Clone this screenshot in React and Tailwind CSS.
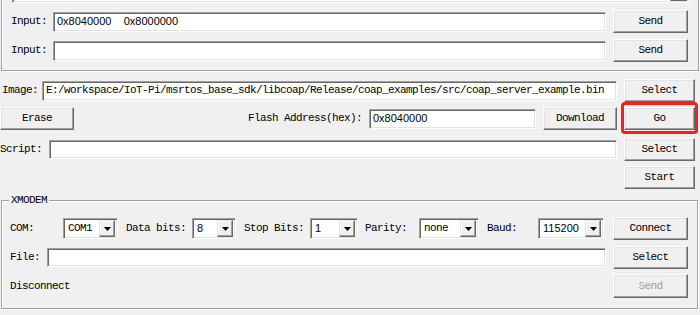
import React from "react";

const mono = "font-['Liberation_Mono',monospace] text-[11px] tracking-[-0.6px] leading-none";
const sans = "font-['Liberation_Sans',Arial,sans-serif] text-[11px] leading-none text-black";

function Btn({ w, h = 23, children, disabled, className = "" }) {
  return (
    <div
      className={`shrink-0 flex items-center justify-center bg-[#f0f0f0] border border-t-white border-l-white border-r-[#696969] border-b-[#696969] shadow-[inset_-1px_-1px_0_#a0a0a0,inset_1px_1px_0_#e3e3e3] ${mono} ${
        disabled ? "text-[#a0a0a0]" : "text-black"
      } ${className}`}
      style={{ width: w, height: h }}
    >
      {children}
    </div>
  );
}

function TextBox({ w, h = 20, children, className = "" }) {
  return (
    <div
      className={`shrink-0 flex items-center overflow-hidden whitespace-pre bg-white border border-t-[#a0a0a0] border-l-[#a0a0a0] border-b-white border-r-white shadow-[inset_1px_1px_0_#696969,inset_-1px_-1px_0_#e3e3e3] ${className}`}
      style={{ width: w, height: h }}
    >
      {children}
    </div>
  );
}

function Combo({ w, value, font }) {
  return (
    <TextBox w={w} h={21} className="justify-between pl-[4px] pr-[2px]">
      <span className={font}>{value}</span>
      <div className="w-[16px] h-[17px] flex items-center justify-center bg-[#f0f0f0] border border-t-[#e3e3e3] border-l-[#e3e3e3] border-r-[#696969] border-b-[#696969] shadow-[inset_-1px_-1px_0_#a0a0a0,inset_1px_1px_0_#fff]">
        <svg width="7" height="4" viewBox="0 0 7 4">
          <path d="M0 0h7L3.5 4z" fill="#000" />
        </svg>
      </div>
    </TextBox>
  );
}

function Label({ w, children, className = "" }) {
  return (
    <div className={`shrink-0 whitespace-pre text-black ${mono} ${className}`} style={{ width: w }}>
      {children}
    </div>
  );
}

export default function App() {
  return (
    <div className="w-[700px] h-[315px] overflow-hidden bg-[#f0f0f0] relative">
      {/* serial send group, top cut off */}
      <div className="ml-[1px] w-[698px] h-[101px] -mt-[30px] border border-[#a0a0a0] shadow-[inset_1px_1px_0_#fff,1px_1px_0_#fff] pl-[9px] pt-[10px]">
        <TextBox w={677} h={22} className="ml-[1px] justify-end pr-[1px]">
          <div className="w-[17px] h-[18px] bg-[#f0f0f0] border border-t-[#e3e3e3] border-l-[#e3e3e3] border-r-[#696969] border-b-[#696969]" />
        </TextBox>
        <div className="flex items-center h-[23px] mt-[7px]">
          <Label w={42}>Input:</Label>
          <TextBox w={553} className="pl-[3px]">
            <span className={sans}>{"0x8040000    0x8000000"}</span>
          </TextBox>
          <Btn w={75} className="ml-[7px]">Send</Btn>
        </div>
        <div className="flex items-center h-[23px] mt-[6px]">
          <Label w={42}>Input:</Label>
          <TextBox w={553} />
          <Btn w={75} className="ml-[7px]">Send</Btn>
        </div>
      </div>

      {/* image */}
      <div className="flex items-center h-[23px] mt-[8px]">
        <Label w={42} className="pl-[2px]">Image:</Label>
        <TextBox w={575} className="pl-[3px]">
          <span className={`text-black ${mono}`}>
            E:/workspace/IoT-Pi/msrtos_base_sdk/libcoap/Release/coap_examples/src/coap_server_example.bin
          </span>
        </TextBox>
        <Btn w={71} className="ml-[7px]">Select</Btn>
      </div>

      <div className="flex items-center h-[23px] mt-[5px]">
        <Btn w={74}>Erase</Btn>
        <Label w={121} className="ml-[174px]">Flash Address(hex):</Label>
        <TextBox w={167} h={20} className="pl-[3px]">
          <span className={sans}>0x8040000</span>
        </TextBox>
        <Btn w={74} className="ml-[7px]">Download</Btn>
        <Btn w={71} className="ml-[7px]">Go</Btn>
      </div>

      <div className="flex items-center h-[23px] mt-[8px]">
        <Label w={49}>Script:</Label>
        <TextBox w={568} h={19} />
        <Btn w={71} className="ml-[7px]">Select</Btn>
      </div>

      <div className="flex items-center h-[23px] mt-[5px]">
        <Btn w={71} className="ml-[624px]">Start</Btn>
      </div>

      {/* XMODEM group */}
      <div className="relative ml-[1px] mt-[11px] w-[697px] h-[109px] border border-[#a0a0a0] shadow-[inset_1px_1px_0_#fff,1px_1px_0_#fff] pl-[8px] pt-[16px]">
        <span className={`absolute -top-[6px] left-[7px] px-[2px] bg-[#f0f0f0] text-black ${mono}`}>XMODEM</span>
        <div className="flex items-center h-[23px]">
          <Label w={53}>COM:</Label>
          <Combo w={55} value="COM1" font={`text-black ${mono}`} />
          <Label w={66} className="ml-[8px]">Data bits:</Label>
          <Combo w={44} value="8" font={sans} />
          <Label w={66} className="ml-[8px]">Stop Bits:</Label>
          <Combo w={48} value="1" font={sans} />
          <Label w={54} className="ml-[7px]">Parity:</Label>
          <Combo w={60} value="none" font={`text-black ${mono}`} />
          <Label w={51} className="ml-[8px]">Baud:</Label>
          <Combo w={66} value="115200" font={sans} />
          <Btn w={75} className="ml-[9px]">Connect</Btn>
        </div>
        <div className="flex items-center h-[23px] mt-[6px]">
          <Label w={37}>File:</Label>
          <TextBox w={559} h={19} />
          <Btn w={75} className="ml-[7px]">Select</Btn>
        </div>
        <div className="flex items-center h-[24px] mt-[5px]">
          <Label w={603}>Disconnect</Label>
          <Btn w={75} h={24} disabled>Send</Btn>
        </div>
      </div>

      {/* red highlight */}
      <div className="absolute left-[621px] top-[102px] w-[77px] h-[32px] border-[3px] border-[#f61d1d] rounded-[4px]" />
    </div>
  );
}
